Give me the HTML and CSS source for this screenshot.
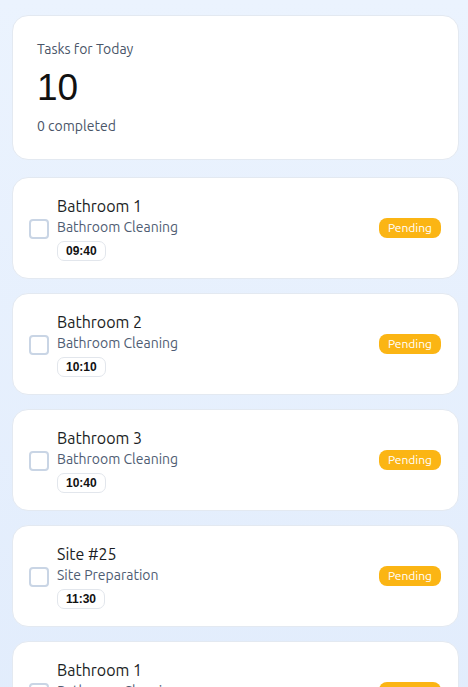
FILE: index.html
```html
<!DOCTYPE html>
<html>
<head>
<meta charset="utf-8">
<link rel="stylesheet" href="styles.css">
</head>
<body>
<main class="page">
  <section class="summary card">
    <div class="summary-label">Tasks for Today</div>
    <div class="summary-count">10</div>
    <div class="summary-sub">0 completed</div>
  </section>
  <div class="task-list">
    <div class="task card">
      <span class="checkbox"></span>
      <div class="task-body">
        <div class="task-title">Bathroom 1</div>
        <div class="task-type">Bathroom Cleaning</div>
        <span class="time">09:40</span>
      </div>
      <span class="status">Pending</span>
    </div>
    <div class="task card">
      <span class="checkbox"></span>
      <div class="task-body">
        <div class="task-title">Bathroom 2</div>
        <div class="task-type">Bathroom Cleaning</div>
        <span class="time">10:10</span>
      </div>
      <span class="status">Pending</span>
    </div>
    <div class="task card">
      <span class="checkbox"></span>
      <div class="task-body">
        <div class="task-title">Bathroom 3</div>
        <div class="task-type">Bathroom Cleaning</div>
        <span class="time">10:40</span>
      </div>
      <span class="status">Pending</span>
    </div>
    <div class="task card">
      <span class="checkbox"></span>
      <div class="task-body">
        <div class="task-title">Site #25</div>
        <div class="task-type">Site Preparation</div>
        <span class="time">11:30</span>
      </div>
      <span class="status">Pending</span>
    </div>
    <div class="task card">
      <span class="checkbox"></span>
      <div class="task-body">
        <div class="task-title">Bathroom 1</div>
        <div class="task-type">Bathroom Cleaning</div>
        <span class="time">12:10</span>
      </div>
      <span class="status">Pending</span>
    </div>
  </div>
</main>
</body>
</html>
```

FILE: styles.css
```css
html, body {
  margin: 0;
  padding: 0;
}
body {
  font-family: "Ubuntu", "Noto Sans", "Open Sans", sans-serif;
  background: linear-gradient(180deg, #ebf3fe 0%, #e1ecfc 100%);
  min-height: 100vh;
  overflow: hidden;
}
.page {
  padding: 15px 9px 20px 12px;
}
.card {
  background: #ffffff;
  border: 1px solid #e3e9f1;
  border-radius: 16px;
  box-sizing: border-box;
}
.summary {
  padding: 24px 24px 23px;
  margin-bottom: 17px;
}
.summary-label {
  font-size: 14px;
  line-height: 19px;
  color: #4a5568;
}
.summary-count {
  font-family: "Liberation Sans", Arial, sans-serif;
  font-size: 37px;
  line-height: 40px;
  color: #111111;
  margin-top: 9px;
}
.summary-sub {
  font-size: 14px;
  line-height: 20px;
  color: #4a5568;
  margin-top: 8px;
}
.task-list {
  display: flex;
  flex-direction: column;
  gap: 14px;
}
.task {
  display: flex;
  align-items: center;
  padding: 17px 17px 17px 16px;
  gap: 8px;
}
.checkbox {
  width: 16px;
  height: 16px;
  border: 2px solid #c9d5e5;
  border-radius: 4px;
  flex: none;
  margin-top: 2px;
}
.task-body {
  flex: 1;
  display: flex;
  flex-direction: column;
  align-items: flex-start;
}
.task-title {
  font-size: 16px;
  line-height: 22px;
  color: #1a1d23;
}
.task-type {
  font-size: 14px;
  line-height: 20px;
  color: #4f5d73;
}
.time {
  margin-top: 4px;
  font-family: "Liberation Sans", Arial, sans-serif;
  font-weight: bold;
  font-size: 12px;
  line-height: 18px;
  color: #111111;
  border: 1px solid #e2e6ec;
  border-radius: 7px;
  padding: 0 8px;
}
.status {
  background: #fbb514;
  color: #ffffff;
  font-size: 12px;
  font-weight: normal;
  line-height: 20px;
  padding: 0 9px;
  border-radius: 8px;
  flex: none;
}
```
